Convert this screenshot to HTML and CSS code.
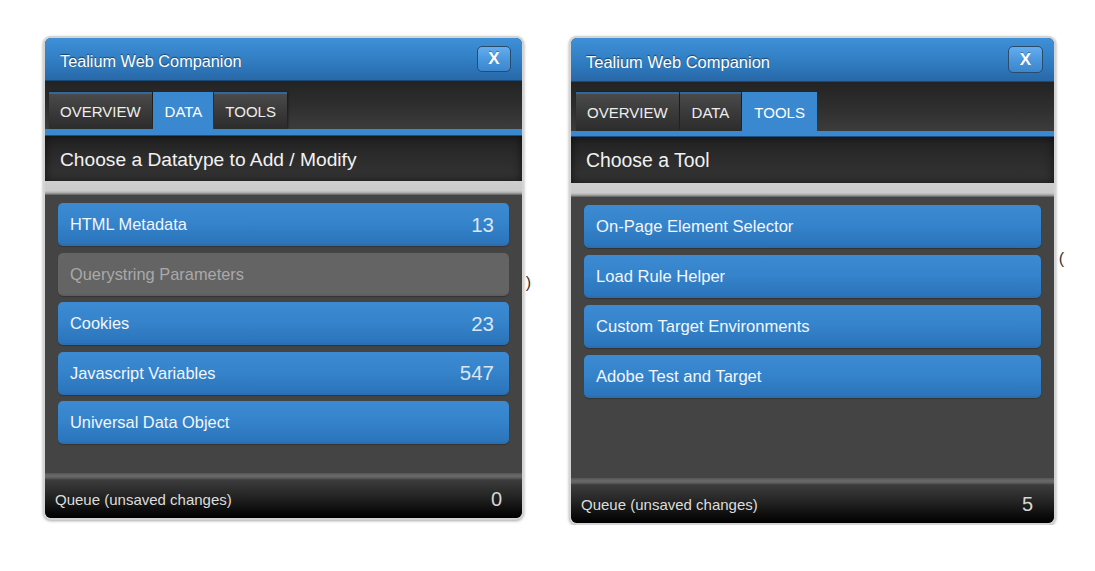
FILE: index.html
```html
<!DOCTYPE html>
<html>
<head>
<meta charset="utf-8">
<link rel="stylesheet" href="styles.css">
</head>
<body>
<div class="stage">
  <div class="panel panel-data">
    <div class="titlebar"><span class="title">Tealium Web Companion</span><span class="close">X</span></div>
    <div class="tabbar">
      <div class="tab">OVERVIEW</div>
      <div class="tab active">DATA</div>
      <div class="tab">TOOLS</div>
    </div>
    <div class="stripe"></div>
    <div class="header">Choose a Datatype to Add / Modify</div>
    <div class="greystrip"></div>
    <div class="body">
      <div class="item"><span>HTML Metadata</span><span class="count">13</span></div>
      <div class="item disabled"><span>Querystring Parameters</span></div>
      <div class="item"><span>Cookies</span><span class="count">23</span></div>
      <div class="item"><span>Javascript Variables</span><span class="count">547</span></div>
      <div class="item"><span>Universal Data Object</span></div>
    </div>
    <div class="footsep"></div>
    <div class="footer"><span>Queue (unsaved changes)</span><span class="qcount">0</span></div>
    <span class="stray stray-right">)</span>
  </div>
  <div class="panel panel-tools">
    <div class="titlebar"><span class="title">Tealium Web Companion</span><span class="close">X</span></div>
    <div class="tabbar">
      <div class="tab">OVERVIEW</div>
      <div class="tab">DATA</div>
      <div class="tab active">TOOLS</div>
    </div>
    <div class="stripe"></div>
    <div class="header">Choose a Tool</div>
    <div class="greystrip"></div>
    <div class="body">
      <div class="item"><span>On-Page Element Selector</span></div>
      <div class="item"><span>Load Rule Helper</span></div>
      <div class="item"><span>Custom Target Environments</span></div>
      <div class="item"><span>Adobe Test and Target</span></div>
    </div>
    <div class="footsep"></div>
    <div class="footer"><span>Queue (unsaved changes)</span><span class="qcount">5</span></div>
    <span class="stray stray-far">(</span>
  </div>
</div>
</body>
</html>
```

FILE: styles.css
```css
html, body {
  margin: 0;
  padding: 0;
  background: #ffffff;
  font-family: "Liberation Sans", Arial, sans-serif;
}

.stage {
  display: flex;
  align-items: flex-start;
  gap: 45px;
  padding: 36px 0 0 43px;
}

.panel {
  position: relative;
  display: flex;
  flex-direction: column;
  border: 2px solid #d4d4d4;
  border-radius: 8px;
  background: #444444;
  box-shadow: 0 1px 3px rgba(0, 0, 0, 0.35);
  overflow: visible;
}

.panel-data {
  width: 477px;
  height: 480px;
}

.panel-tools {
  width: 483px;
  height: 485px;
}

.titlebar {
  display: flex;
  align-items: center;
  justify-content: space-between;
  height: 43px;
  padding: 0 11px 0 15px;
  background: linear-gradient(to bottom, #3f90d8 0%, #2f7bc0 60%, #2868a8 100%);
  border-bottom: 1px solid #1c4a78;
  border-radius: 6px 6px 0 0;
  box-sizing: border-box;
  flex: none;
}

.panel-tools .titlebar {
  height: 44px;
}

.title {
  padding-top: 5px;
  color: #ffffff;
  font-size: 16.3px;
  text-shadow: 0 -1px 1px rgba(0, 0, 0, 0.5);
}

.panel-tools .title {
  font-size: 16.5px;
}

.close {
  display: flex;
  align-items: center;
  justify-content: center;
  width: 32px;
  height: 24px;
  border: 1px solid #2b4b6b;
  border-radius: 5px;
  background: linear-gradient(to bottom, #64aeee 0%, #4a96dc 55%, #3b86cc 100%);
  color: #ffffff;
  font-weight: bold;
  font-size: 17px;
  text-shadow: 0 -1px 0 rgba(0, 0, 0, 0.3);
}

.panel-tools .close {
  width: 33px;
  height: 25px;
}

.tabbar {
  display: flex;
  align-items: flex-end;
  gap: 1px;
  height: 48px;
  padding: 0 0 0 4px;
  box-sizing: border-box;
  background: linear-gradient(to bottom, #232323 0%, #2e2e2e 50%, #3c3c3c 100%);
  flex: none;
}

.panel-tools .tabbar {
  height: 49px;
  padding-left: 5px;
}

.tab {
  display: flex;
  align-items: center;
  height: 37px;
  padding: 0 11px;
  box-sizing: border-box;
  border-top: 2px solid #2e6aa0;
  background: linear-gradient(to bottom, #4a4a4a 0%, #3a3a3a 50%, #2c2c2c 100%);
  color: #eeeeee;
  font-size: 15px;
  box-shadow: 1px 0 2px rgba(0, 0, 0, 0.5);
}

.panel-tools .tab {
  height: 39px;
  padding: 0 12px;
}

.panel-tools .tab:first-child {
  padding: 0 11px;
}

.tab.active {
  background: #3a88cf;
  border-top-color: #3a88cf;
  color: #ffffff;
  box-shadow: none;
  padding: 0 11px 0 12px;
}

.panel-tools .tab.active {
  padding: 0 12px;
}

.stripe {
  height: 7px;
  background: #3a88cf;
  border-bottom: 1px solid #1e4e7e;
  box-sizing: border-box;
  flex: none;
}

.panel-tools .stripe {
  height: 6px;
}

.header {
  display: flex;
  align-items: center;
  height: 45px;
  padding: 2px 0 0 15px;
  box-sizing: border-box;
  background: linear-gradient(to bottom, #222222 0%, #2c2c2c 50%, #343434 100%);
  box-shadow: inset 0 0 10px rgba(0, 0, 0, 0.6);
  color: #f2f2f2;
  font-size: 19.2px;
  flex: none;
}

.panel-tools .header {
  height: 46px;
  padding-top: 1px;
  font-size: 19.4px;
}

.greystrip {
  height: 14px;
  background: linear-gradient(to bottom, #cfcfcf 0%, #cbcbcb 70%, #a8a8a8 85%, #5a5a5a 100%);
  flex: none;
}

.body {
  flex: 1;
  display: flex;
  flex-direction: column;
  gap: 6.5px;
  padding: 8px 13px 0 13px;
  background: #444444;
}

.panel-tools .body {
  gap: 7px;
}

.item {
  display: flex;
  align-items: center;
  justify-content: space-between;
  height: 43px;
  padding: 2px 15px 0 12px;
  box-sizing: border-box;
  border-radius: 5px;
  background: linear-gradient(to bottom, #3c8ad2 0%, #3583cb 50%, #2b74ba 100%);
  border-bottom: 2px solid #2b6fb2;
  box-shadow: 0 1px 1px rgba(0, 0, 0, 0.25);
  color: #f2f6fa;
  font-size: 16.4px;
  flex: none;
}

.panel-tools .item {
  font-size: 16.6px;
}

.item.disabled {
  background: #646464;
  border-bottom-color: #5e5e5e;
  color: #a9a9a9;
}

.count {
  color: #dbe6f0;
  font-size: 20.5px;
}

.footsep {
  height: 7px;
  background: linear-gradient(to bottom, #555555 0%, #6a6a6a 40%, #5e5e5e 70%, #3a3a3a 100%);
  flex: none;
}

.footer {
  display: flex;
  align-items: center;
  justify-content: space-between;
  height: 38px;
  padding: 1px 20px 0 10px;
  box-sizing: border-box;
  background: linear-gradient(to bottom, #3c3c3c 0%, #262626 40%, #0c0c0c 80%, #000000 100%);
  border-radius: 0 0 6px 6px;
  color: #dddddd;
  font-size: 15px;
  flex: none;
}

.panel-tools .footer {
  padding-right: 21px;
}

.qcount {
  font-size: 20px;
  color: #d6d6d6;
}

.stray {
  position: absolute;
  color: #333333;
  font-size: 16px;
}

.stray-right {
  right: -9px;
  top: 236px;
}

.stray-far {
  right: -10px;
  top: 212px;
}
```
